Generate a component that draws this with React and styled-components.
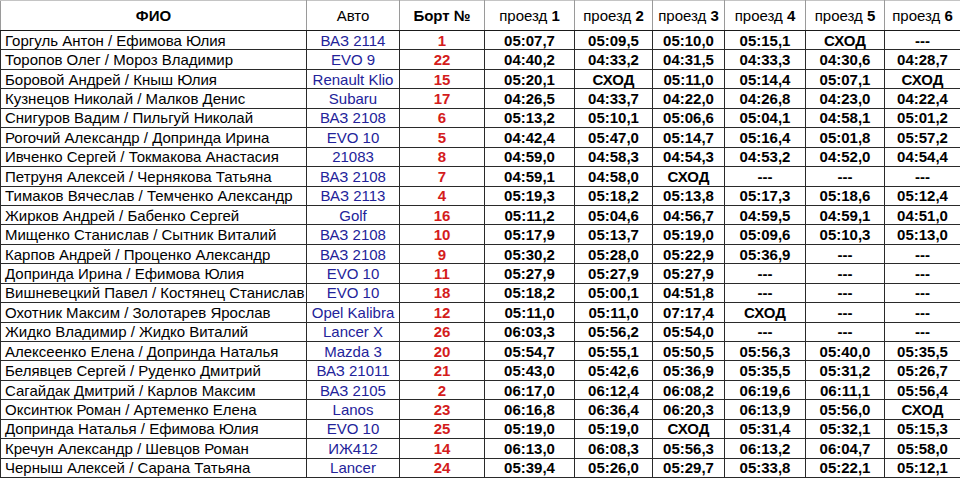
import React from 'react'
import styled, { createGlobalStyle } from 'styled-components'

const rows = [
  ['Горгуль Антон / Ефимова Юлия', 'ВАЗ 2114', '1', '05:07,7', '05:09,5', '05:10,0', '05:15,1', 'СХОД', '---'],
  ['Торопов Олег / Мороз Владимир', 'EVO 9', '22', '04:40,2', '04:33,2', '04:31,5', '04:33,3', '04:30,6', '04:28,7'],
  ['Боровой Андрей / Кныш Юлия', 'Renault Klio', '15', '05:20,1', 'СХОД', '05:11,0', '05:14,4', '05:07,1', 'СХОД'],
  ['Кузнецов Николай / Малков Денис', 'Subaru', '17', '04:26,5', '04:33,7', '04:22,0', '04:26,8', '04:23,0', '04:22,4'],
  ['Снигуров Вадим / Пильгуй Николай', 'ВАЗ 2108', '6', '05:13,2', '05:10,1', '05:06,6', '05:04,1', '04:58,1', '05:01,2'],
  ['Рогочий Александр / Допринда Ирина', 'EVO 10', '5', '04:42,4', '05:47,0', '05:14,7', '05:16,4', '05:01,8', '05:57,2'],
  ['Ивченко Сергей / Токмакова Анастасия', '21083', '8', '04:59,0', '04:58,3', '04:54,3', '04:53,2', '04:52,0', '04:54,4'],
  ['Петруня Алексей / Чернякова Татьяна', 'ВАЗ 2108', '7', '04:59,1', '04:58,0', 'СХОД', '---', '---', '---'],
  ['Тимаков Вячеслав / Темченко Александр', 'ВАЗ 2113', '4', '05:19,3', '05:18,2', '05:13,8', '05:17,3', '05:18,6', '05:12,4'],
  ['Жирков Андрей / Бабенко Сергей', 'Golf', '16', '05:11,2', '05:04,6', '04:56,7', '04:59,5', '04:59,1', '04:51,0'],
  ['Мищенко Станислав / Сытник Виталий', 'ВАЗ 2108', '10', '05:17,9', '05:13,7', '05:19,0', '05:09,6', '05:10,3', '05:13,0'],
  ['Карпов Андрей / Проценко Александр', 'ВАЗ 2108', '9', '05:30,2', '05:28,0', '05:22,9', '05:36,9', '---', '---'],
  ['Допринда Ирина / Ефимова Юлия', 'EVO 10', '11', '05:27,9', '05:27,9', '05:27,9', '---', '---', '---'],
  ['Вишневецкий Павел / Костянец Станислав', 'EVO 10', '18', '05:18,2', '05:00,1', '04:51,8', '---', '---', '---'],
  ['Охотник Максим / Золотарев Ярослав', 'Opel Kalibra', '12', '05:11,0', '05:11,0', '07:17,4', 'СХОД', '---', '---'],
  ['Жидко Владимир / Жидко Виталий', 'Lancer X', '26', '06:03,3', '05:56,2', '05:54,0', '---', '---', '---'],
  ['Алексеенко Елена / Допринда Наталья', 'Mazda 3', '20', '05:54,7', '05:55,1', '05:50,5', '05:56,3', '05:40,0', '05:35,5'],
  ['Белявцев Сергей / Руденко Дмитрий', 'ВАЗ 21011', '21', '05:43,0', '05:42,6', '05:36,9', '05:35,5', '05:31,2', '05:26,7'],
  ['Сагайдак Дмитрий / Карлов Максим', 'ВАЗ 2105', '2', '06:17,0', '06:12,4', '06:08,2', '06:19,6', '06:11,1', '05:56,4'],
  ['Оксинтюк Роман / Артеменко Елена', 'Lanos', '23', '06:16,8', '06:36,4', '06:20,3', '06:13,9', '05:56,0', 'СХОД'],
  ['Допринда Наталья / Ефимова Юлия', 'EVO 10', '25', '05:19,0', '05:19,0', 'СХОД', '05:31,4', '05:32,1', '05:15,3'],
  ['Кречун Александр / Шевцов Роман', 'ИЖ412', '14', '06:13,0', '06:08,3', '05:56,3', '06:13,2', '06:04,7', '05:58,0'],
  ['Черныш Алексей / Сарана Татьяна', 'Lancer', '24', '05:39,4', '05:26,0', '05:29,7', '05:33,8', '05:22,1', '05:12,1'],
]

const widths = [306, 93, 85, 90, 78, 72, 81, 79, 76]

const GlobalStyle = createGlobalStyle`
  body {
    margin: 0;
    background: #fff;
    font-family: "Liberation Sans", Arial, sans-serif;
  }
`

const Sheet = styled.table`
  width: 960px;
  table-layout: fixed;
  border-collapse: collapse;
  font-size: 15px;
  color: #000;
`

const HeadRow = styled.tr`
  height: 30px;
`

const Row = styled.tr`
  height: 19.45px;
`

const HeadCell = styled.th`
  padding: 0;
  text-align: center;
  vertical-align: middle;
  font-weight: ${p => (p.$bold ? 'bold' : 'normal')};
  border-top: 1px solid #c4c4c4;
  border-left: 1px solid #9a9a9a;
  border-right: 1px solid #9a9a9a;
  border-bottom: 1px solid #1a1a1a;
  white-space: nowrap;

  b {
    font-weight: bold;
  }
`

const tones = {
  name: 'color: #000; font-weight: normal; text-align: left; padding-left: 4px;',
  car: 'color: #23239a; font-weight: normal; text-align: center;',
  num: 'color: #d41c1c; font-weight: bold; text-align: center;',
  time: 'color: #000; font-weight: bold; text-align: center;',
}

const Cell = styled.td`
  padding: 0;
  vertical-align: middle;
  line-height: 17px;
  white-space: nowrap;
  overflow: hidden;
  border: 1px solid #2a2a2a;
  ${p => tones[p.$tone]}
`

const toneFor = i => (i === 0 ? 'name' : i === 1 ? 'car' : i === 2 ? 'num' : 'time')

export default function App() {
  return (
    <>
      <GlobalStyle />
      <Sheet>
        <colgroup>
          {widths.map((w, i) => (
            <col key={i} style={{ width: w }} />
          ))}
        </colgroup>
        <thead>
          <HeadRow>
            <HeadCell $bold>ФИО</HeadCell>
            <HeadCell>Авто</HeadCell>
            <HeadCell $bold>Борт №</HeadCell>
            {[1, 2, 3, 4, 5, 6].map(n => (
              <HeadCell key={n}>
                проезд <b>{n}</b>
              </HeadCell>
            ))}
          </HeadRow>
        </thead>
        <tbody>
          {rows.map((r, ri) => (
            <Row key={ri}>
              {r.map((v, ci) => (
                <Cell key={ci} $tone={toneFor(ci)}>
                  {v}
                </Cell>
              ))}
            </Row>
          ))}
        </tbody>
      </Sheet>
    </>
  )
}
